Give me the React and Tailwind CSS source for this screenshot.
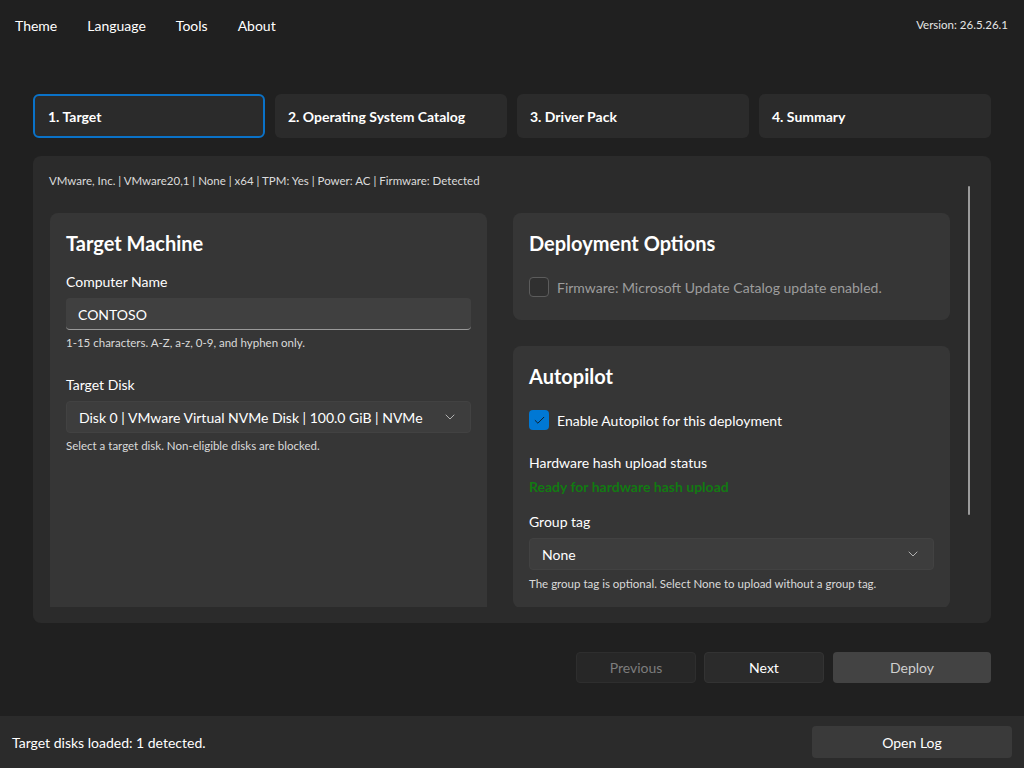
import React from 'react';
import { Check, ChevronDown } from 'lucide-react';

const font = { fontFamily: 'Lato, "Noto Sans", sans-serif' };

const tabs = ['1. Target', '2. Operating System Catalog', '3. Driver Pack', '4. Summary'];

const Card = ({ title, className = '', children }) => (
  <div className={`bg-[#363636] rounded-lg px-4 pt-4 ${className}`}>
    <h2 className="text-[20px] leading-[28px] font-bold text-white">{title}</h2>
    {children}
  </div>
);

const Select = ({ value }) => (
  <div className="h-8 rounded-[4px] bg-[#3d3d3d] border border-[#424242] flex items-center justify-between pl-3 pr-3">
    <span className="text-[14px] text-white">{value}</span>
    <ChevronDown size={16} strokeWidth={1.2} className="text-[#cfcfcf]" />
  </div>
);

const CheckRow = ({ checked, disabled, label }) => (
  <div className="h-8 flex items-center gap-2">
    {checked ? (
      <span className="w-5 h-5 rounded-[4px] bg-[#0078d4] flex items-center justify-center">
        <Check size={13} strokeWidth={1.6} className="text-[#111]" />
      </span>
    ) : (
      <span className="w-5 h-5 rounded-[4px] border border-[#5c5c5c] bg-[#303030]" />
    )}
    <span className={`text-[14px] ${disabled ? 'text-[#9d9d9d]' : 'text-white'}`}>{label}</span>
  </div>
);

export default function App() {
  return (
    <div style={font} className="w-[1024px] h-[768px] bg-[#202020] text-white flex flex-col overflow-hidden">
      {/* menu bar */}
      <div className="h-[50px] flex items-center justify-between pl-[15px] pr-4">
        <div className="flex items-center gap-[30px] text-[14px]">
          <span>Theme</span>
          <span>Language</span>
          <span>Tools</span>
          <span>About</span>
        </div>
        <span className="text-[11.5px] text-[#e6e6e6]">Version: 26.5.26.1</span>
      </div>

      {/* wizard steps */}
      <div className="mt-[44px] px-[33px] grid grid-cols-4 gap-[10px]">
        {tabs.map((t, i) => (
          <div
            key={t}
            className={`h-[44px] rounded-[6px] bg-[#2b2b2b] flex items-center px-[13px] text-[14px] font-bold ${
              i === 0 ? 'border-2 border-[#0a72c8]' : ''
            }`}
          >
            {t}
          </div>
        ))}
      </div>

      {/* step content */}
      <div className="relative mt-[18px] mx-[33px] h-[467px] rounded-lg bg-[#2b2b2b] pt-[17px] pl-4 pr-[41px] pb-4 flex flex-col">
        <p className="text-[11.5px] leading-4 text-[#dcdcdc]">
          VMware, Inc. | VMware20,1 | None | x64 | TPM: Yes | Power: AC | Firmware: Detected
        </p>
        <div className="flex-1 overflow-hidden mt-[24px] pl-px">
          <div className="grid grid-cols-2 gap-[26px] items-stretch">
            <Card title="Target Machine" className="min-h-[500px] pb-4">
              <div className="mt-[15px] text-[14px] leading-5">Computer Name</div>
              <div className="mt-[6px] h-8 rounded-[4px] bg-[#404040] border-b border-[#9a9a9a] flex items-center px-3 pt-[2px] text-[14px]">
                CONTOSO
              </div>
              <div className="mt-[5px] text-[11.5px] leading-4 text-[#dadada]">1-15 characters. A-Z, a-z, 0-9, and hyphen only.</div>
              <div className="mt-[24px] text-[14px] leading-5">Target Disk</div>
              <div className="mt-[6px]">
                <Select value="Disk 0 | VMware Virtual NVMe Disk | 100.0 GiB | NVMe" />
              </div>
              <div className="mt-[5px] text-[11.5px] leading-4 text-[#dadada]">Select a target disk. Non-eligible disks are blocked.</div>
            </Card>

            <div className="flex flex-col gap-[26px]">
              <Card title="Deployment Options" className="pb-[17px]">
                <div className="mt-[14px]">
                  <CheckRow disabled label="Firmware: Microsoft Update Catalog update enabled." />
                </div>
              </Card>
              <Card title="Autopilot" className="pb-4">
                <div className="mt-[14px]">
                  <CheckRow checked label="Enable Autopilot for this deployment" />
                </div>
                <div className="mt-[17px] text-[14px] leading-5">Hardware hash upload status</div>
                <div className="mt-1 text-[14px] leading-5 font-bold text-[#127a12]">Ready for hardware hash upload</div>
                <div className="mt-[15px] text-[14px] leading-5">Group tag</div>
                <div className="mt-[6px]">
                  <Select value="None" />
                </div>
                <div className="mt-[6px] text-[11.5px] leading-4 text-[#dadada]">
                  The group tag is optional. Select None to upload without a group tag.
                </div>
              </Card>
            </div>
          </div>
        </div>
        {/* overlay scroll indicator */}
        <div className="absolute right-[21px] top-[30px] w-[2px] h-[329px] rounded-full bg-[#9b9b9b]" />
      </div>

      {/* navigation */}
      <div className="mt-[29px] px-[33px] flex justify-end text-[14px]">
        <button className="w-[120px] h-[31px] rounded-[4px] bg-[#272727] border border-[#2e2e2e] text-[#7d7d7d]">Previous</button>
        <button className="ml-2 w-[120px] h-[31px] rounded-[4px] bg-[#2b2b2b] border border-[#333] text-white">Next</button>
        <button className="ml-[9px] w-[158px] h-[31px] rounded-[4px] bg-[#434343] text-[#cfcfcf]">Deploy</button>
      </div>

      {/* status bar */}
      <div className="mt-auto h-[52px] bg-[#2b2b2b] flex items-center justify-between pl-3 pr-3">
        <span className="text-[14px]">Target disks loaded: 1 detected.</span>
        <button className="w-[200px] h-8 rounded-[4px] bg-[#3a3a3a] text-[14px]">Open Log</button>
      </div>
    </div>
  );
}
